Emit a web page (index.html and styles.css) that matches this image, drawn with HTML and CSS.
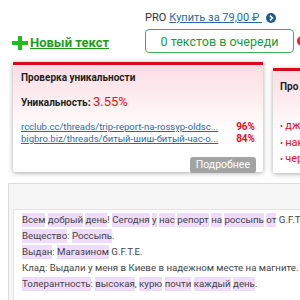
FILE: index.html
```html
<!DOCTYPE html>
<html lang="ru">
<head>
<meta charset="utf-8">
<link rel="stylesheet" href="styles.css">
</head>
<body>
<div class="page">
  <div class="header">
    <div class="new">
      <svg class="plus" width="16" height="14" viewBox="0 0 16 14"><path d="M6 0h4v5h6v4h-6v5H6V9H0V5h6z" fill="#1fbf1f"/></svg>
      <a class="new-link" href="#">Новый текст</a>
    </div>
    <div class="right">
      <div class="pro">PRO <a href="#" class="buy">Купить за 79,00 ₽&nbsp;</a><span class="go"><svg width="10" height="10" viewBox="0 0 10 10"><circle cx="5" cy="5" r="5" fill="#1f5a8c"/><path d="M4 2.6L6.4 5 4 7.4" stroke="#fff" stroke-width="1.6" fill="none"/></svg></span></div>
      <div class="qrow">
        <div class="queue">0 текстов в очереди</div>
        <span class="red-dot"></span>
      </div>
    </div>
  </div>

  <div class="panels">
    <div class="panel p1">
      <div class="ptitle">Проверка уникальности</div>
      <div class="uniq">Уникальность: <span class="pct">3.55%</span></div>
      <div class="links">
        <div class="lrow"><a href="#">rcclub.cc/threads/trip-report-na-rossyp-oldsc...</a><span class="lp">96%</span></div>
        <div class="lrow"><a href="#">bigbro.biz/threads/битый-шиш-битый-час-о...</a><span class="lp">84%</span></div>
      </div>
      <div class="more-row"><span class="more">Подробнее</span></div>
    </div>
    <div class="panel p2">
      <div class="ptitle">Про</div>
      <ul class="bul">
        <li>джо</li>
        <li>нак</li>
        <li>чер</li>
      </ul>
    </div>
  </div>

  <div class="main">
    <div class="mhead"></div>
    <div class="mbody">
      <p><mark>Всем</mark> <mark>добрый</mark> <mark>день</mark>! <mark>Сегодня</mark> <mark>у</mark> <mark>нас</mark> <mark>репорт</mark> <mark>на</mark> <mark>россыпь</mark> <mark>от</mark> G.F.T.E.<br>
      <mark>Вещество</mark>: <mark>Россыпь</mark>.<br>
      <mark>Выдан</mark>: <mark>Магазином</mark> G.F.T.E.<br>
      Клад: Выдали у меня в Киеве в надежном месте на магните.<br>
      <mark>Толерантность</mark>: <mark>высокая</mark>, <mark>курю</mark> <mark>почти</mark> <mark>каждый</mark> <mark>день</mark>.</p>
      <p><mark>Сначала</mark> <mark>немного</mark> <mark>о</mark> <mark>магазине</mark> <mark>и</mark> <mark>о</mark> <mark>том</mark>, <mark>как</mark> <mark>все</mark> <mark>прошло</mark>.</p>
    </div>
  </div>
</div>
</body>
</html>
```

FILE: styles.css
```css
* { box-sizing: border-box; }
html, body { margin: 0; padding: 0; }
body {
  width: 300px;
  height: 300px;
  overflow: hidden;
  background: #fff;
  font-family: Roboto, "Noto Sans", sans-serif;
  color: #333;
}
.page { width: 300px; }

.header {
  display: flex;
  height: 56px;
}
.new {
  flex: none;
  width: 145px;
  padding: 35px 0 0 12px;
  display: flex;
  align-items: center;
  gap: 2px;
  height: 50px;
}
.plus { flex: none; }
.new-link {
  color: #1a9f1a;
  font-weight: bold;
  font-size: 13px;
  text-decoration: underline;
  text-underline-offset: 1px;
}
.right {
  flex: none;
  width: 155px;
  display: flex;
  flex-direction: column;
}
.pro {
  margin-top: 11px;
  font-size: 11px;
  line-height: 14px;
  height: 14px;
  white-space: nowrap;
  display: flex;
  align-items: center;
  gap: 3px;
}
.buy { color: #2a6a9c; text-decoration: underline; }
.go { display: inline-flex; margin-left: 1px; }
.qrow {
  margin-top: 4px;
  display: flex;
  align-items: center;
  gap: 3px;
}
.queue {
  flex: none;
  width: 149px;
  height: 24px;
  border: 1px solid #3cae5a;
  border-radius: 4px;
  color: #22983f;
  font-size: 12.5px;
  display: flex;
  align-items: center;
  justify-content: center;
}
.red-dot {
  width: 10px;
  height: 10px;
  border-radius: 50%;
  background: #e2262c;
  flex: none;
}

.panels {
  display: flex;
  align-items: flex-start;
  margin-top: 6px;
  padding-left: 13px;
  gap: 10px;
}
.panel {
  border-top: 3px solid #d9091c;
  background: linear-gradient(#fbdde2, #fff 65%);
  box-shadow: 0 1px 5px rgba(0,0,0,0.35);
  border-radius: 0 0 3px 3px;
  flex: none;
}
.p1 { width: 250px; height: 110px; padding: 7px 7px 0 8px; }
.p2 { width: 60px; height: 105px; margin-top: 6px; padding: 10px 0 0 7px; }
.ptitle {
  font-size: 10px;
  font-weight: bold;
  color: #222;
  line-height: 12px;
}
.uniq {
  margin-top: 11px;
  font-size: 10px;
  font-weight: bold;
  color: #222;
  line-height: 14px;
}
.pct { color: #e5101c; font-size: 13px; font-weight: normal; }
.links { margin-top: 11px; }
.lrow {
  display: flex;
  justify-content: space-between;
  font-size: 9.5px;
  line-height: 12px;
  padding-right: 1px;
  white-space: nowrap;
}
.lrow a { color: #1f6ea7; text-decoration: underline; }
.lp { color: #e5101c; font-weight: bold; font-size: 10px; }
.more-row {
  display: flex;
  justify-content: flex-end;
  margin-top: 12px;
}
.more {
  background: #a3a3a3;
  color: #fff;
  font-size: 10.5px;
  line-height: 16px;
  padding: 0 6px;
  border-radius: 3px;
}
.bul {
  list-style: none;
  margin: 25px 0 0;
  padding: 0;
  color: #e5101c;
  font-size: 11px;
}
.bul li { line-height: 16.5px; }
.bul li::before { content: "• "; font-size: 9px; }

.main {
  margin: 10px 0 0 8px;
  border-top: 1px solid #dcdcdc;
  border-left: 1px solid #dcdcdc;
  background: #f6f6f6;
}
.mhead { height: 25px; }
.mbody {
  margin-left: 4px;
  background: #fff;
  border-top: 1px solid #e4e4e4;
  border-left: 1px solid #e4e4e4;
  padding: 2px 0 0 8px;
  font-size: 9.7px;
  line-height: 16px;
  color: #444;
  white-space: nowrap;
}
.mbody p { margin: 0 0 16px; }
mark {
  background: #efdcfb;
  color: #444;
  padding: 1px 0 2px;
}
```
